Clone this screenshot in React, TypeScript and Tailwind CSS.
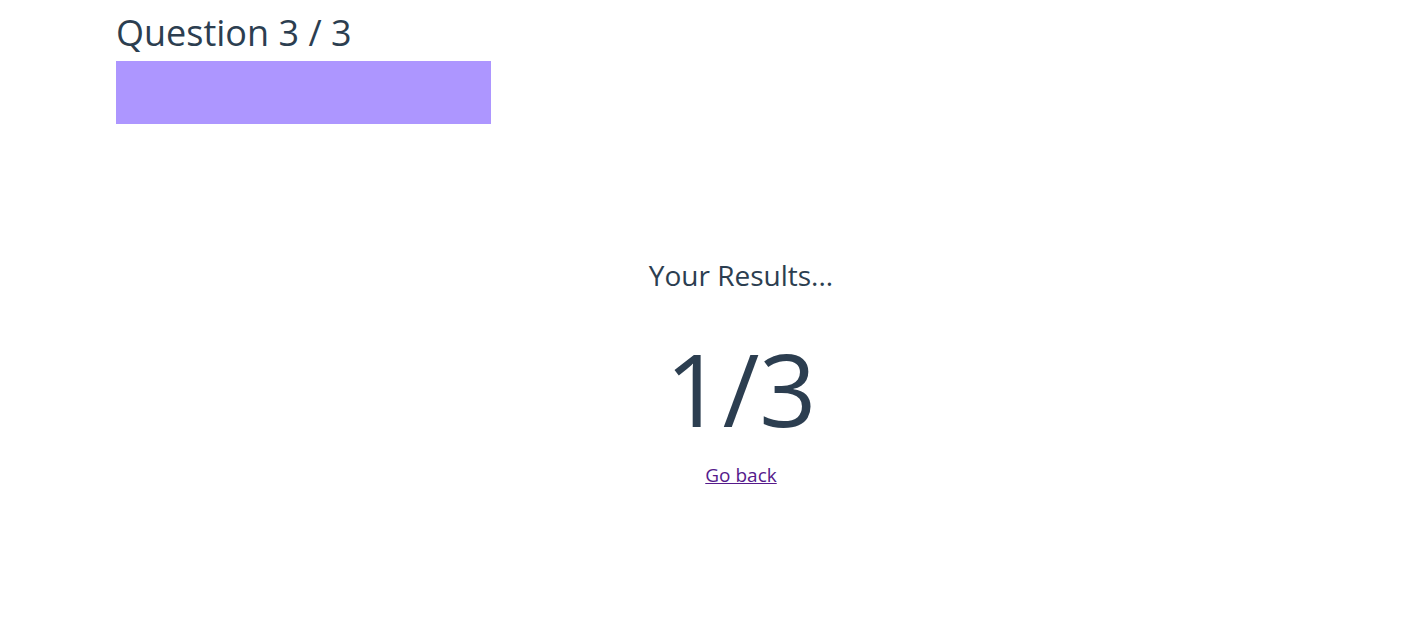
export default function App() {
  const current = 3;
  const total = 3;
  const score = 1;

  return (
    <div className="min-h-screen bg-white text-[#2c3e50] font-['Open_Sans',sans-serif]">
      <div className="ml-[116px] w-[1250px] pt-[8px]">
        <h1 className="text-[36px] leading-[50px] font-normal">
          Question {current} / {total}
        </h1>
        <div className="mt-[3px] h-[63px] w-[375px] bg-[#ad96ff]" />

        <div className="mt-[131px] flex flex-col items-center">
          <h2 className="text-[28px] leading-[40px] font-normal">Your Results...</h2>
          <p className="mt-[33px] text-[100px] leading-[120px]">
            {score}/{total}
          </p>
          <a href="#" className="mt-[14px] text-[19px] leading-[26px] text-[#551a8b] underline">
            Go back
          </a>
        </div>
      </div>
    </div>
  );
}
